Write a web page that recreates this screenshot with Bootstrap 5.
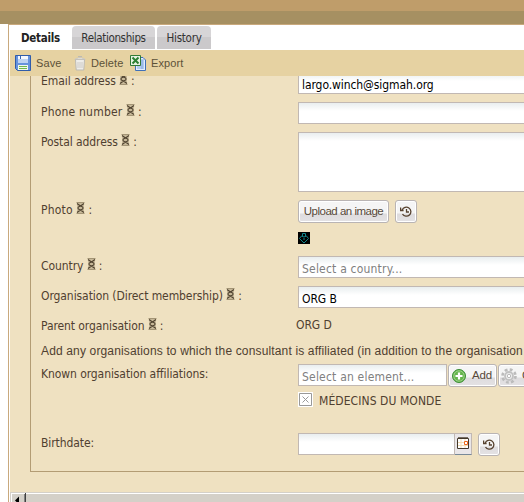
<!DOCTYPE html>
<html lang="en">
<head>
<meta charset="utf-8">
<title>Contact details</title>
<link href="https://cdn.jsdelivr.net/npm/bootstrap@5.3.0/dist/css/bootstrap.min.css" rel="stylesheet">
<style>
body{background:#fff;height:502px;font:12px/18px "DejaVu Sans Condensed","DejaVu Sans",sans-serif;color:#4f4030;letter-spacing:-.08px;white-space:nowrap}
svg{display:block;flex:none}
.arial{font-family:"Liberation Sans",Arial,sans-serif;letter-spacing:0}
.top-a{height:11px;background:#bf9d6a}
.top-b{height:13px;background:#a69062}
.panel{margin-left:8px;border-left:1px solid #c9a97d;border-top:1px solid #c9a97d;padding-left:1px;height:478px}
.tabs{height:25px;padding-top:1px;gap:2px}
.tabs .nav-link{height:23px;padding:0;font-size:11.5px;line-height:24px;letter-spacing:-.25px;border-radius:4px 4px 0 0;color:#333;text-align:center;background:linear-gradient(#d7d5d7 0 11px,#cbc9cb 11px)}
.tabs .nav-link.active{background:#fff;font-weight:bold;color:#222;width:60px;padding-left:1px}
.tabs .tab-rel{width:83px;letter-spacing:-.35px}.tabs .tab-his{width:54px}
.tools{height:26px;background:#e6d2a2;font-size:11px;color:#5c5138;padding-left:5px;letter-spacing:.1px}
.save{margin-left:5px;width:36px}.del{margin-left:3px;width:41px}.xls{margin-left:-2px}.exp{margin-left:5px}
.body-area{height:416px;background:#efe1c1}
.group-box{margin-left:20px;width:640px;border:solid #b39c74;border-width:0 0 1px 1px;height:400px;padding-left:10px}
.line{height:30px}
.line-label{width:257px;flex:none;padding-top:1px}
.line-label svg{display:inline-block;margin:-5px 3px 0 0}
.first .line-label{padding-top:0}
.field{height:22px;border:1px solid #c1b8b3;background:linear-gradient(#e9eeef,#fff 8px);color:#000;padding:2px 0 0 3px;line-height:20px}
.hint{color:#808080;letter-spacing:.2px}
.push{height:23px;border:1px solid #b9b4b4;border-radius:3px;background:linear-gradient(#f5f5f5 0 12px,#dedcde 13px,#e4e2e4);box-shadow:inset 0 0 0 1px #fff;color:#57493a;line-height:21px;padding:0;text-align:center;font-size:11.5px;letter-spacing:-.15px}
.first{margin-top:-4px}.tall{height:68px}.area{height:60px}.photo{height:56px}
.phone,.photo .line-label{letter-spacing:.2px}
.upload{width:91px;letter-spacing:-.5px}.clock{width:22px;margin-left:6px}
.pic{width:12px;height:12px;margin-top:9px}
.value{margin-left:-2px}.parent{height:26px}.note{height:22px;letter-spacing:.15px}
.affil{height:69px}.pick{width:149px;margin-right:1px}
.add{width:49px;padding-left:3px}.add span{margin-left:6px}.create span{margin-left:5px}
.create{width:70px;margin-left:1px;padding-left:2px}
.chosen{margin-top:5px}.chosen span{margin-left:6px;line-height:19px;letter-spacing:.08px}
.date{width:157px}
.cal{width:17px;height:22px;border:solid #c1b8b3;border-width:1px 1px 1px 0;border-bottom-color:#788998;background:#e9e6e8;padding:3px 0 0 2px}
.scroll{height:10px;background:#d4d0c8;border-top:1px solid #d4d0c8;box-shadow:inset 0 1px #fff}
.scroll-btn{width:16px;height:9px;border-left:1px solid #d4d0c8;border-right:1px solid #404040;box-shadow:inset 1px 1px #fff,inset -1px 0 #808080}
</style>
<script src="https://cdn.jsdelivr.net/npm/bootstrap@5.3.0/dist/js/bootstrap.bundle.min.js"></script>
</head>
<body class="overflow-hidden">
<svg width="0" height="0" class="position-absolute"><defs>
<symbol id="dna" viewBox="0 0 9 12"><path fill="#c8b999" d="M1 0h7v12H1z"/><path d="M.5 .5h8M.5 11.500h8" stroke="#a39475" fill="none"/><path d="M1 1.500L4.500 4 8 1.500M1 10.500L4.500 8 8 10.500M4.500 4C1 5 1 7 4.500 8 8 7 8 5 4.500 4" fill="none" stroke="#4f422f" stroke-width="1.100"/></symbol>
<symbol id="hist" viewBox="0 0 12 11"><path d="M2.200 4A4.500 4.500 0 1 1 2.500 8M.6 1.500v3h3M6.500 3v3H9" fill="none" stroke="#57422f" stroke-width="1.300"/></symbol>
</defs></svg>
<div class="top-a"></div><div class="top-b"></div>
<main class="panel">
 <nav class="nav tabs flex-nowrap">
  <a class="nav-link active">Details</a><a class="nav-link tab-rel">Relationships</a><a class="nav-link tab-his">History</a>
 </nav>
 <div class="tools arial d-flex align-items-center">
  <svg width="16" height="16" viewBox="0 0 16 16"><path d="M.5.5h15v15h-13l-2-2z" fill="#6693dd" stroke="#305caa"/><path fill="#f4f8ff" d="M3 1h10v7H3z"/><path fill="#bed3f2" d="M3 4h10v4H3z"/><path fill="#3a67b4" d="M5 1h1v3H5z"/><path fill="#f3f8ed" d="M3 10h10v5H3z"/><path fill="#6fb84f" d="M4 11h8v1H4zM4 13h8v1H4z"/></svg>
  <span class="save">Save</span>
  <svg width="16" height="16" viewBox="0 0 16 16"><path d="M6 1.500h4M3.500 4.500l.7 10.500h7.600l.7-10.500z" fill="#eeede9" stroke="#bbb9b3"/><path d="M3 4.500c0-2 10-2 10 0z" fill="#fafafa" stroke="#c3c0ba"/><path d="M6 7v6M8 7v6M10 7v6" stroke="#ccc9c5"/></svg>
  <span class="del">Delete</span>
  <svg class="xls" width="16" height="16" viewBox="0 0 16 16"><path d="M8 2.500h5l2.500 2.500v10.500H5.500V4z" fill="#e1edff" stroke="#4070b8"/><path d="M9 5h5M9 7h5M9 9h5M7 11h7M7 13h7M12 5v9" stroke="#82a9df"/><path d="M.5.5h10v10H.5z" fill="#e7f3e2" stroke="#327b36"/><path d="M2.500 2.500l6 6M8.500 2.500l-6 6" stroke="#2c8032" stroke-width="2"/></svg>
  <span class="exp">Export</span>
 </div>
 <div class="body-area overflow-hidden">
  <section class="group-box">
   <div class="line first d-flex"><div class="line-label">Email address <svg width="9" height="12"><use href="#dna"/></svg>:</div><div class="field flex-fill">largo.winch@sigmah.org</div></div>
   <div class="line d-flex"><div class="line-label phone">Phone number <svg width="9" height="12"><use href="#dna"/></svg>:</div><div class="field flex-fill"></div></div>
   <div class="line tall d-flex"><div class="line-label">Postal address <svg width="9" height="12"><use href="#dna"/></svg>:</div><div class="field area flex-fill"></div></div>
   <div class="line photo d-flex"><div class="line-label">Photo <svg width="9" height="12"><use href="#dna"/></svg>:</div>
    <div><div class="d-flex"><button class="push upload arial">Upload an image</button><button class="push clock d-flex align-items-center justify-content-center" aria-label="History"><svg width="12" height="11"><use href="#hist"/></svg></button></div>
    <svg class="pic" viewBox="0 0 12 12"><path d="M0 0h12v12H0z"/><path d="M4.500 4V1.500h3V4M6 11L1.500 6.500l2-2.500L6 5l2.500-1 2 2.500zM6 6v2" fill="none" stroke="#12858a"/></svg></div></div>
   <div class="line d-flex"><div class="line-label">Country <svg width="9" height="12"><use href="#dna"/></svg>:</div><div class="field hint flex-fill">Select a country...</div></div>
   <div class="line d-flex"><div class="line-label">Organisation (Direct membership) <svg width="9" height="12"><use href="#dna"/></svg>:</div><div class="field flex-fill">ORG B</div></div>
   <div class="line parent d-flex"><div class="line-label">Parent organisation <svg width="9" height="12"><use href="#dna"/></svg>:</div><div class="value">ORG D</div></div>
   <div class="note arial">Add any organisations to which the consultant is affiliated (in addition to the organisation</div>
   <div class="line affil d-flex"><div class="line-label">Known organisation affiliations:</div>
    <div><div class="d-flex"><div class="field pick hint">Select an element...</div>
     <button class="push add arial d-flex align-items-center"><svg width="14" height="14" viewBox="0 0 14 14"><circle cx="7" cy="7" r="6.500" fill="#65b54c" stroke="#3b8d36"/><circle cx="7" cy="7" r="5.200" fill="none" stroke="#a7d894" stroke-width=".8"/><path d="M7 3.500v7M3.500 7h7" stroke="#fff" stroke-width="2.200"/></svg><span>Add</span></button>
     <button class="push create arial d-flex align-items-center"><svg width="16" height="16" viewBox="0 0 16 16"><circle cx="8" cy="8" r="6.500" fill="none" stroke="#bbb" stroke-width="2.600" stroke-dasharray="2.800 2.300"/><circle cx="8" cy="8" r="4" fill="#eee" stroke="#c2c2c2" stroke-width="1.800"/><circle cx="8" cy="8" r="1.700" fill="#fff" stroke="#bbb"/></svg><span>Create</span></button></div>
    <div class="d-flex chosen"><svg width="15" height="15" viewBox="0 0 15 15"><path fill="#fff" d="M0 0h15v15H0z"/><path d="M1.500 1.500h12v12h-12zM4.500 4.500l6 6M10.500 4.500l-6 6" fill="none" stroke="#999"/></svg><span>MÉDECINS DU MONDE</span></div></div></div>
   <div class="line d-flex"><div class="line-label">Birthdate:</div><div class="field date"></div>
    <div class="cal"><svg width="12" height="13" viewBox="0 0 12 13"><path fill="#fff" d="M0 1h12v11H0z"/><path d="M4 2v10M8 2v10M1 5.500h10M1 8.500h10" stroke="#f6dfb4"/><path d="M.5 1.500h11v10H.5zM1 .8h10" fill="none" stroke="#43382a"/><path d="M7.500 4.500h3v3h-3z" fill="#fff" stroke="#ef6a1c"/></svg></div>
    <button class="push clock d-flex align-items-center justify-content-center" aria-label="History"><svg width="12" height="11"><use href="#hist"/></svg></button></div>
  </section>
 </div>
 <div class="scroll"><div class="scroll-btn"><svg width="14" height="9" viewBox="0 0 14 9"><path d="M4 7.500L8 3.500v8z" fill="#000"/></svg></div></div>
</main>
</body>
</html>
